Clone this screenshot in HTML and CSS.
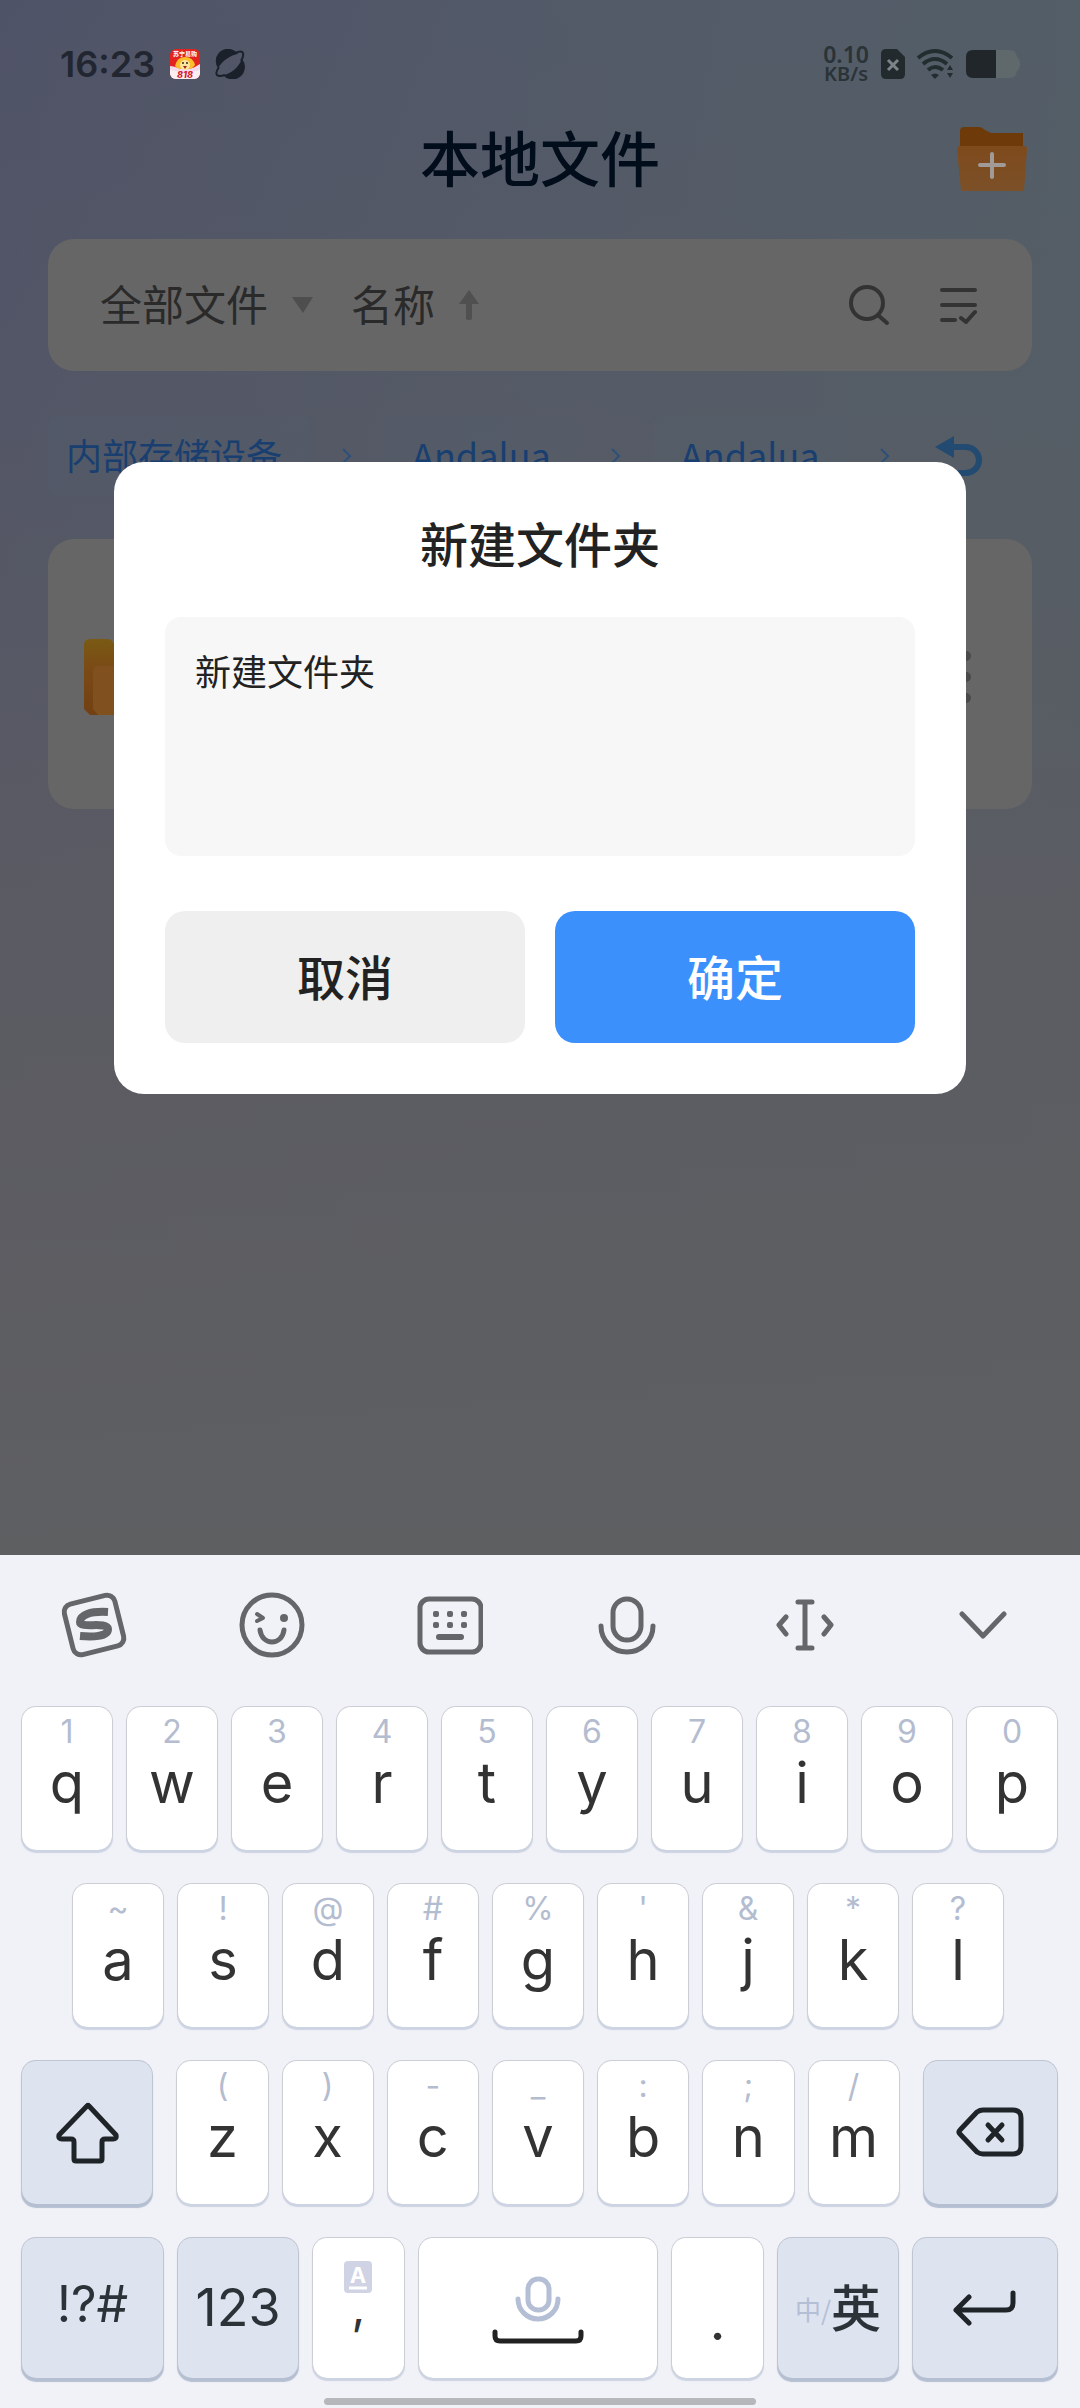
FILE: index.html
```html
<!DOCTYPE html>
<html lang="zh-CN">
<head>
<meta charset="utf-8">
<meta name="viewport" content="width=device-width, initial-scale=1">
<title>本地文件</title>
<link rel="stylesheet" href="styles.css">
</head>
<body>
<div class="app">
  <div class="status">
    <div class="status-left">
      <span class="clock">16:23</span>
      <svg class="app-badge" width="30" height="30" viewBox="0 0 30 30" aria-hidden="true">
        <defs><clipPath id="badge"><rect width="30" height="30" rx="6"/></clipPath></defs>
        <g clip-path="url(#badge)">
          <rect width="30" height="30" fill="#e2231f"/>
          <path d="M0 17C5 17 8 20 15 20S25 18 30 15V30H0Z" fill="#f3d9ea"/>
          <path d="M0 21Q15 25 30 21V30H0Z" fill="#fbeef0"/>
          <path d="M5 17Q7 8 15 8T25 16Q22 20 19 20H10Q7 20 5 17Z" fill="#fbbf2c"/>
          <circle cx="15" cy="16" r="5" fill="#ffe6a0"/>
          <circle cx="13" cy="14" r="1" fill="#3a2a10"/><circle cx="17" cy="14" r="1" fill="#3a2a10"/>
          <path d="M13 17h4l-2 3z" fill="#a3231b"/>
          <text x="15" y="7" class="badge-name">苏宁易购</text>
          <text x="15" y="29" class="badge-num">818</text>
        </g>
      </svg>
      <svg width="30" height="30" viewBox="0 0 30 30" fill="#1b212b" aria-hidden="true">
        <path d="M3 19A12 12 0 0 1 23 5C16 6 8 11 3 19Z"/>
        <path d="M27 10A12 12 0 0 1 8 26C16 25 23 19 27 10Z"/>
        <path d="M20 4Q27 1 28 4T26 12M4 18Q0 24 2 26T10 26" fill="none" stroke="#1b212b" stroke-width="2"/>
      </svg>
    </div>
    <div class="status-right">
      <span class="speed"><span class="speed-value">0.10</span><span>KB/s</span></span>
      <svg width="24" height="30" viewBox="0 0 24 30" aria-hidden="true">
        <path d="M5 0H16L24 8V25Q24 30 19 30H5Q0 30 0 25V5Q0 0 5 0Z" fill="#222a2e"/>
        <path d="M7 11l10 10M17 11L7 21" stroke="#7b8589" stroke-width="3"/>
      </svg>
      <svg width="37" height="30" viewBox="0 0 37 30" aria-hidden="true">
        <g fill="none" stroke="#222d30" stroke-width="4">
          <path d="M1 9Q18 -5 35 9"/><path d="M6 15Q18 5 30 15"/><path d="M11 21Q18 15 26 21"/>
        </g>
        <path d="M14 26Q18 23 22 26L18 30Z" fill="#222d30"/>
        <path d="M30 21l3-5 3 5zM30 24h6l-3 5z" fill="#222d30"/>
      </svg>
      <svg width="54" height="28" viewBox="0 0 54 28" aria-hidden="true">
        <path d="M30 0H43Q50 0 51 7Q54 9 54 14T51 21Q50 28 43 28H30Z" fill="#5f686a"/>
        <path d="M30 0V28H7Q0 28 0 21V7Q0 0 7 0Z" fill="#20262a"/>
      </svg>
    </div>
  </div>

  <header class="topbar">
    <h1>本地文件</h1>
    <button class="icon-btn add-folder" aria-label="新建文件夹">
      <svg width="70" height="64" viewBox="0 0 70 64">
        <defs><linearGradient id="front" x1="0" y1="0" x2="0" y2="1"><stop offset="0" stop-color="#7e4a1c"/><stop offset="1" stop-color="#7c5028"/></linearGradient></defs>
        <path d="M3 4Q3 0 7 0H22Q25 0 28 3L34 6H66V30H3Z" fill="#6e3a0a"/>
        <path d="M3 19H67Q70 19 70 22L67 64H4L0 22Q0 19 3 19Z" fill="url(#front)"/>
        <path d="M35 27V50M23 38H47" stroke="#a29a96" stroke-width="4" stroke-linecap="round"/>
      </svg>
    </button>
  </header>

  <main>
    <div class="filter">
      <button class="filter-btn"><span>全部文件</span>
        <svg width="21" height="16" viewBox="0 0 21 16"><path d="M0 0H21L11 16Z" fill="#4e4e4e"/></svg>
      </button>
      <button class="filter-btn sort"><span>名称</span>
        <svg width="20" height="30" viewBox="0 0 20 30"><path d="M10 0L20 14H13V28Q13 30 10 30T7 28V14H0Z" fill="#505050"/></svg>
      </button>
      <span class="spacer"></span>
      <button class="icon-btn" aria-label="搜索">
        <svg width="41" height="41" viewBox="0 0 41 41" fill="none" stroke="#333" stroke-width="4" stroke-linecap="round"><circle cx="18" cy="18" r="16"/><path d="M30 31L38 38"/></svg>
      </button>
      <button class="icon-btn" aria-label="多选">
        <svg width="37" height="37" viewBox="0 0 37 37" fill="none" stroke="#333" stroke-width="4" stroke-linecap="round" stroke-linejoin="round"><path d="M2 3H35M2 18H35M2 33H15M21 31L26 35L35 25"/></svg>
      </button>
    </div>

    <nav class="crumbs" aria-label="路径">
      <a class="crumb first" href="#">内部存储设备</a>
      <svg width="10" height="16" viewBox="0 0 10 16"><path d="M1 1L8 8L1 15"/></svg>
      <a class="crumb" href="#">Andalua</a>
      <svg width="10" height="16" viewBox="0 0 10 16"><path d="M1 1L8 8L1 15"/></svg>
      <a class="crumb" href="#">Andalua</a>
      <svg width="10" height="16" viewBox="0 0 10 16"><path d="M1 1L8 8L1 15"/></svg>
      <button class="icon-btn back" aria-label="返回上级">
        <svg width="48" height="40" viewBox="0 0 48 40"><path d="M0 11L19 0V22Z" fill="#234a70"/><path d="M17 11H31A13 13 0 0 1 31 37H14" fill="none" stroke="#234a70" stroke-width="6"/></svg>
      </button>
    </nav>

    <div class="file">
      <svg width="90" height="76" viewBox="0 0 90 76" aria-hidden="true">
        <defs><linearGradient id="fold" x1="0" y1="0" x2="0" y2="1"><stop offset="0" stop-color="#7a5a14"/><stop offset="0.4" stop-color="#7a4a16"/><stop offset="1" stop-color="#724012"/></linearGradient></defs>
        <path d="M6 0H24Q28 0 32 8H84Q90 8 90 14V76H6L0 70V6Q0 0 6 0Z" fill="url(#fold)"/>
        <path d="M14 27H84Q90 27 90 33V76H14L9 70V33Q9 27 14 27Z" fill="#80501f"/>
      </svg>
      <button class="icon-btn" aria-label="更多">
        <svg width="12" height="54" viewBox="0 0 12 54" fill="#4a4a4a"><circle cx="6" cy="6" r="5"/><circle cx="6" cy="27" r="5"/><circle cx="6" cy="48" r="5"/></svg>
      </button>
    </div>
  </main>

  <div class="overlay">
    <form class="dialog" role="dialog" aria-labelledby="dlg-title">
      <label id="dlg-title" class="dialog-title" for="name">新建文件夹</label>
      <textarea id="name" class="dialog-input">新建文件夹</textarea>
      <div class="dialog-actions">
        <button type="button" class="btn">取消</button>
        <button type="button" class="btn primary">确定</button>
      </div>
    </form>
  </div>
</div>

<div class="keyboard">
  <div class="tools">
    <button class="tool" aria-label="菜单">
      <svg width="68" height="68" viewBox="0 0 68 68" fill="none" stroke="#656669"><rect x="8" y="8" width="52" height="52" rx="8" stroke-width="5" transform="rotate(-14 34 34)"/><path d="M48 21C30 20 20 24 20 31C20 38 47 30 48 38C48 46 32 46 20 45" stroke-width="8"/></svg>
    </button>
    <button class="tool" aria-label="表情">
      <svg width="66" height="66" viewBox="0 0 66 66" fill="none" stroke="#656669" stroke-width="5" stroke-linecap="round" stroke-linejoin="round"><circle cx="33" cy="33" r="30"/><path d="M21 38C23 54 43 54 45 38"/><path d="M18 22L24 26L18 29" stroke-width="4"/><circle cx="45" cy="26" r="4" fill="#656669" stroke="none"/></svg>
    </button>
    <button class="tool" aria-label="键盘">
      <svg width="66" height="60" viewBox="0 0 66 60"><rect x="3" y="4" width="61" height="53" rx="9" fill="none" stroke="#656669" stroke-width="5"/><g fill="#656669"><rect x="16" y="16" width="6" height="6" rx="2"/><rect x="30" y="16" width="6" height="6" rx="2"/><rect x="44" y="16" width="6" height="6" rx="2"/><rect x="16" y="27" width="6" height="6" rx="2"/><rect x="30" y="27" width="6" height="6" rx="2"/><rect x="44" y="27" width="6" height="6" rx="2"/><rect x="19" y="39" width="28" height="6" rx="3"/></g></svg>
    </button>
    <button class="tool" aria-label="语音">
      <svg width="58" height="60" viewBox="0 0 58 60" fill="none" stroke="#656669" stroke-width="5" stroke-linecap="round"><rect x="15" y="4" width="28" height="41" rx="14"/><path d="M3 31A26 26 0 0 0 55 31"/></svg>
    </button>
    <button class="tool" aria-label="光标">
      <svg width="58" height="54" viewBox="0 0 58 54" fill="none" stroke="#656669" stroke-width="5" stroke-linecap="round" stroke-linejoin="round"><path d="M22 4H36M22 50H36M29 4V50M10 19L3 27L10 36M48 19L55 27L48 36"/></svg>
    </button>
    <button class="tool" aria-label="收起">
      <svg width="48" height="28" viewBox="0 0 48 28" fill="none" stroke="#656669" stroke-width="5" stroke-linecap="round" stroke-linejoin="round"><path d="M3 3L24 25L45 3"/></svg>
    </button>
  </div>

  <div class="rows">
    <div class="row">
      <button class="key"><span class="hint">1</span><span>q</span></button>
      <button class="key"><span class="hint">2</span><span>w</span></button>
      <button class="key"><span class="hint">3</span><span>e</span></button>
      <button class="key"><span class="hint">4</span><span>r</span></button>
      <button class="key"><span class="hint">5</span><span>t</span></button>
      <button class="key"><span class="hint">6</span><span>y</span></button>
      <button class="key"><span class="hint">7</span><span>u</span></button>
      <button class="key"><span class="hint">8</span><span>i</span></button>
      <button class="key"><span class="hint">9</span><span>o</span></button>
      <button class="key"><span class="hint">0</span><span>p</span></button>
    </div>
    <div class="row inset">
      <button class="key"><span class="hint">~</span><span>a</span></button>
      <button class="key"><span class="hint">!</span><span>s</span></button>
      <button class="key"><span class="hint">@</span><span>d</span></button>
      <button class="key"><span class="hint">#</span><span>f</span></button>
      <button class="key"><span class="hint">%</span><span>g</span></button>
      <button class="key"><span class="hint">'</span><span>h</span></button>
      <button class="key"><span class="hint">&amp;</span><span>j</span></button>
      <button class="key"><span class="hint">*</span><span>k</span></button>
      <button class="key"><span class="hint">?</span><span>l</span></button>
    </div>
    <div class="row">
      <button class="key fn shift" aria-label="大写">
        <svg width="63" height="62" viewBox="0 0 63 62" fill="none" stroke="#1e2427" stroke-width="5" stroke-linejoin="round"><path d="M31 4Q32 3 33 4L60 33Q61 37 57 37H49Q46 37 46 40V57Q46 59 44 59H20Q18 59 18 57V40Q18 37 15 37H6Q2 37 3 33Z"/></svg>
      </button>
      <button class="key"><span class="hint">(</span><span>z</span></button>
      <button class="key"><span class="hint">)</span><span>x</span></button>
      <button class="key"><span class="hint">-</span><span>c</span></button>
      <button class="key"><span class="hint">_</span><span>v</span></button>
      <button class="key"><span class="hint">:</span><span>b</span></button>
      <button class="key"><span class="hint">;</span><span>n</span></button>
      <button class="key"><span class="hint">/</span><span>m</span></button>
      <button class="key fn erase" aria-label="删除">
        <svg width="68" height="50" viewBox="0 0 68 50" fill="none" stroke="#1e2427" stroke-width="5" stroke-linecap="round" stroke-linejoin="round"><path d="M4 23L21 5Q24 3 27 3H57Q65 3 65 11V39Q65 47 57 47H27Q24 47 21 45L4 27Q2 25 4 23Z"/><path d="M32 18L46 33M46 18L32 33"/></svg>
      </button>
    </div>
    <div class="row last">
      <button class="key fn symbols">!?#</button>
      <button class="key fn digits">123</button>
      <button class="key comma">
        <svg width="28" height="32" viewBox="0 0 28 32" aria-hidden="true"><rect width="28" height="32" rx="4" fill="#d0d3e4"/><text x="14" y="22" class="key-a">A</text><path d="M5 27H23" stroke="#fff" stroke-width="3"/></svg>
        <span>,</span>
      </button>
      <button class="key space" aria-label="空格">
        <svg width="92" height="68" viewBox="0 0 92 68" fill="none" stroke-linecap="round" stroke-linejoin="round"><g stroke="#b4bfd6" stroke-width="5"><rect x="36" y="3" width="21" height="31" rx="10"/><path d="M26 23A20 20 0 0 0 66 23"/></g><path d="M3 56V60Q3 65 8 65H84Q89 65 89 60V56" stroke="#222" stroke-width="5"/></svg>
      </button>
      <button class="key period">.</button>
      <button class="key fn lang"><span class="lang-off">中/</span><span class="lang-on">英</span></button>
      <button class="key fn enter" aria-label="换行">
        <svg width="64" height="36" viewBox="0 0 64 36" fill="none" stroke="#1e2427" stroke-width="5" stroke-linecap="round" stroke-linejoin="round"><path d="M16 7L3 20L16 33M3 20H53Q60 20 60 13V3"/></svg>
      </button>
    </div>
  </div>
  <div class="home"></div>
</div>
</body>
</html>
```
FILE: styles.css
```css
* { box-sizing: border-box; }

body {
  margin: 0;
  min-height: 100vh;
  display: flex;
  flex-direction: column;
  font-family: Inter, "Noto Sans CJK SC", sans-serif;
}

button {
  font: inherit;
  color: inherit;
  border: 0;
  padding: 0;
  background: none;
}

svg { display: block; flex: none; }

.app {
  position: relative;
  flex: 1;
  font-family: "Noto Sans CJK SC", sans-serif;
  background:
    linear-gradient(180deg, rgba(94, 95, 97, 0) 0, rgba(93, 92, 97, 0.25) 28%, rgba(93, 92, 97, 0.8) 60%, #5e5f61 100%),
    linear-gradient(100deg, #4f5367 0, #535b68 50%, #525f66 100%);
}

/* Status bar */
.status {
  display: flex;
  justify-content: space-between;
  align-items: center;
  height: 88px;
  padding: 40px 60px 0 60px;
}

.status-left, .status-right {
  display: flex;
  align-items: center;
}

.status-left { gap: 15px; }
.status-right { gap: 12px; }

.clock {
  font: 600 36px/48px Inter, sans-serif;
  color: #222631;
}

.badge-name { font-size: 6px; font-weight: 700; fill: #fff; text-anchor: middle; }
.badge-num { font: italic 800 9px Inter, sans-serif; fill: #d3202d; text-anchor: middle; }

.speed {
  display: flex;
  flex-direction: column;
  align-items: center;
  font: 600 20px/19px "Noto Sans", sans-serif;
  color: #2a3337;
}

.speed-value { font-size: 23px; }

/* Header */
.topbar {
  display: grid;
  grid-template-columns: 1fr auto 1fr;
  align-items: center;
  margin-top: 31px;
  padding: 0 53px;
}

.topbar h1 {
  grid-column: 2;
  margin: 0;
  padding-bottom: 6px;
  font-size: 60px;
  line-height: 74px;
  font-weight: 500;
  color: #020d1c;
}

.add-folder { justify-self: end; }

/* Filter bar */
.filter {
  display: flex;
  align-items: center;
  gap: 50px;
  height: 132px;
  margin: 40px 48px 0;
  padding: 0 55px 0 52px;
  border-radius: 26px;
  background: #666;
}

.filter-btn {
  display: flex;
  align-items: center;
  gap: 24px;
  font-size: 42px;
  line-height: 60px;
  color: #2a2a2a;
}

.filter-btn span { padding-bottom: 4px; }
.filter-btn.sort { margin-left: -12px; }
.spacer { flex: 1; }

/* Breadcrumbs */
.crumbs {
  display: flex;
  align-items: center;
  gap: 32px;
  margin: 45px 48px 0;
}

.crumbs > svg {
  fill: none;
  stroke: #2c5079;
  stroke-width: 2;
}

.crumb {
  padding: 0 28px 4px;
  border-radius: 8px;
  background: rgba(80, 98, 115, 0.15);
  font-size: 36px;
  line-height: 76px;
  color: #183f70;
  text-decoration: none;
}

.crumb.first { padding-left: 18px; }
.back { margin-left: 13px; }

/* File list */
.file {
  display: flex;
  align-items: center;
  justify-content: space-between;
  height: 270px;
  margin: 43px 48px 0;
  padding: 6px 60px 0 36px;
  border-radius: 26px;
  background: #666;
}

/* Dialog */
.overlay {
  position: absolute;
  inset: 0;
  display: flex;
  align-items: center;
  padding: 0 114px;
}

.dialog {
  flex: 1;
  display: flex;
  flex-direction: column;
  padding: 48px 51px 51px;
  border-radius: 30px;
  background: #fff;
  color: #222;
}

.dialog-title {
  font-size: 48px;
  line-height: 64px;
  font-weight: 500;
  text-align: center;
}

.dialog-input {
  height: 239px;
  margin: 43px 0 55px;
  padding: 28px 30px;
  border: 0;
  border-radius: 16px;
  outline: 0;
  resize: none;
  background: #f7f7f7;
  font: inherit;
  font-size: 36px;
  line-height: 50px;
  color: #222;
}

.dialog-actions {
  display: grid;
  grid-template-columns: 1fr 1fr;
  gap: 30px;
}

.btn {
  height: 132px;
  padding-bottom: 4px;
  border-radius: 20px;
  background: #efefef;
  font-size: 48px;
  font-weight: 500;
}

.btn.primary {
  background: #3b90fc;
  color: #fff;
}

/* Keyboard */
.keyboard {
  padding-bottom: 3px;
  background: #f1f2f7;
}

.tools {
  display: flex;
  height: 140px;
  padding: 0 8px 0 5px;
}

.tool {
  flex: 1;
  display: flex;
  align-items: center;
  justify-content: center;
}

.rows {
  display: flex;
  flex-direction: column;
  gap: 33px;
  padding: 11px 22px 0 21px;
}

.row {
  display: flex;
  gap: 13px;
  height: 144px;
}

.row.inset { padding: 0 54px 0 51px; }
.row.last { height: 141px; }

.key {
  flex: 92 0 0;
  display: flex;
  flex-direction: column;
  align-items: center;
  padding-top: 6px;
  border: 1px solid #ccced6;
  border-bottom: 0;
  border-radius: 15px;
  background: #fff;
  box-shadow: 0 3px 1px #ccd3e2;
  font-size: 56px;
  line-height: 64px;
  color: #333;
}

.hint {
  font-size: 32px;
  line-height: 38px;
  color: #b4bcd0;
}

.key.fn {
  justify-content: center;
  padding-top: 0;
  background: #dde3ef;
  border-color: #c0c5d2;
  box-shadow: 0 4px 1px #b5bfd2;
  color: #2c3338;
}

.key.shift { flex-grow: 133; margin-right: 10px; }
.key.erase { flex-grow: 136; margin-left: 10px; padding-bottom: 2px; }
.key.symbols { flex-grow: 143; padding-bottom: 8px; font-size: 50px; }
.key.digits { flex-grow: 122; font-size: 52px; }
.key.space { flex-grow: 242; padding-top: 38px; }
.key.period { padding-top: 50px; }
.key.comma { padding-top: 23px; }
.comma span { margin-top: -10px; font-size: 48px; line-height: 48px; }
.key.enter { flex-grow: 146; }

.key-a {
  font: 700 22px Inter, sans-serif;
  fill: #fff;
  text-anchor: middle;
}

.key.lang {
  flex-grow: 122;
  flex-direction: row;
  align-items: center;
  padding-bottom: 6px;
  font-family: "Noto Sans CJK SC", sans-serif;
}

.lang-off {
  padding-top: 8px;
  font-size: 26px;
  color: #b4bfd6;
}

.lang-on {
  font-size: 50px;
  font-weight: 500;
}

.home {
  width: 40%;
  height: 7px;
  margin: 20px auto 0;
  border-radius: 4px;
  background: #b6b7ba;
}
```
